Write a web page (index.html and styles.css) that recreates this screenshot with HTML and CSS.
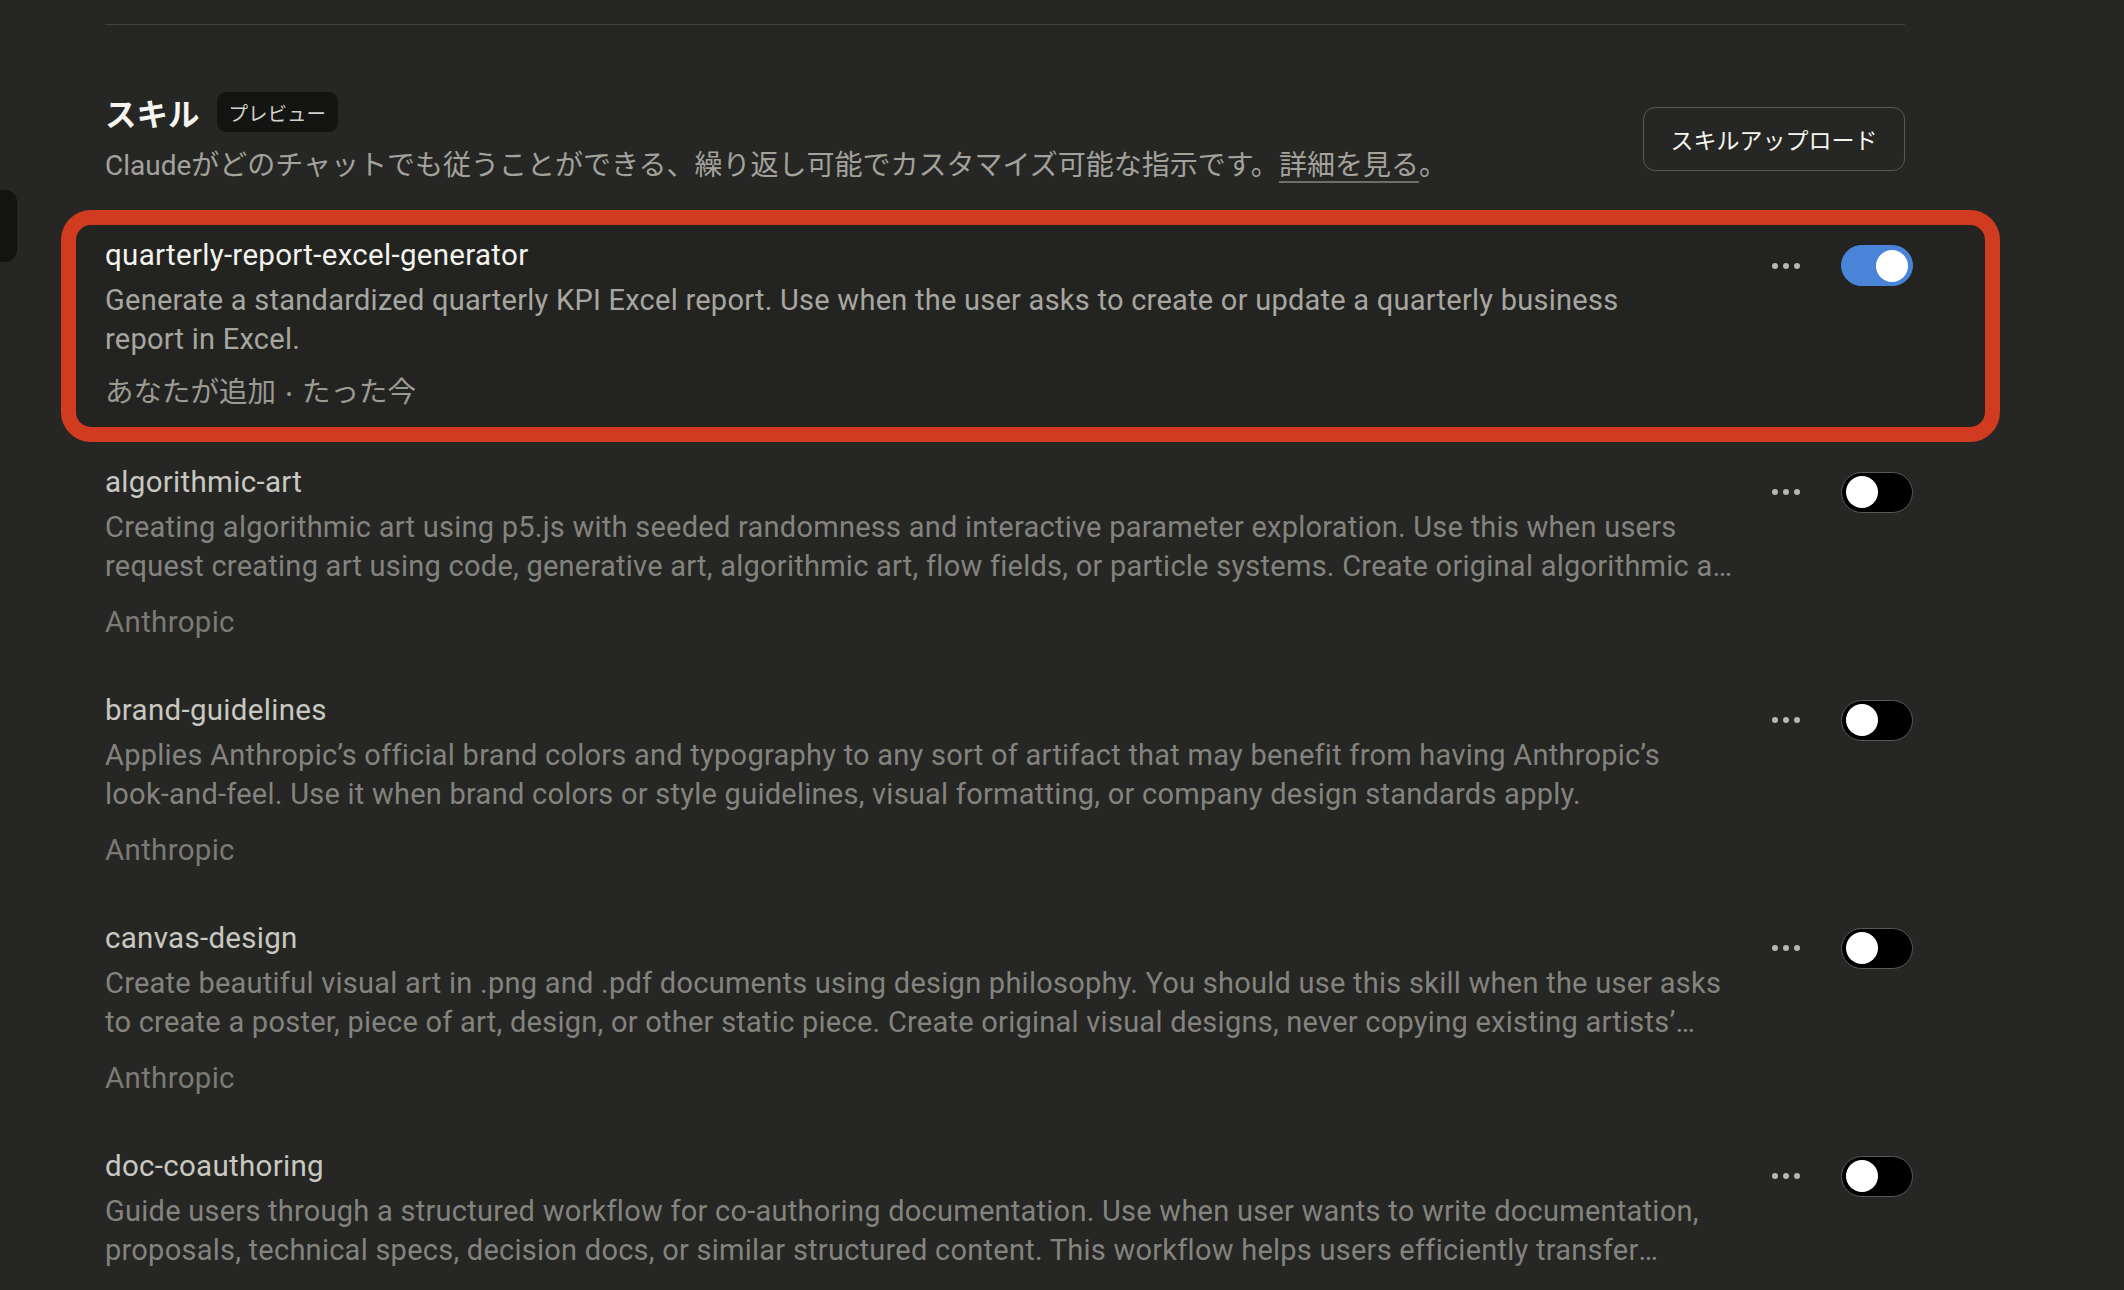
FILE: index.html
```html
<!DOCTYPE html>
<html lang="ja">
<head>
<meta charset="utf-8">
<title>スキル</title>
<link rel="stylesheet" href="styles.css">
</head>
<body>
<div class="side-tab"></div>
<main class="page">
  <div class="divider"></div>
  <section class="header">
    <div class="header-text">
      <div class="title-row">
        <h2 class="title">スキル</h2>
        <span class="badge">プレビュー</span>
      </div>
      <p class="header-desc">Claudeがどのチャットでも従うことができる、繰り返し可能でカスタマイズ可能な指示です。<a class="link" href="#">詳細を見る</a>。</p>
    </div>
    <button class="upload-btn">スキルアップロード</button>
  </section>

  <ul class="list">
    <li class="item highlighted">
      <div class="item-text">
        <div class="name">quarterly-report-excel-generator</div>
        <div class="desc">Generate a standardized quarterly KPI Excel report. Use when the user asks to create or update a quarterly business<br>report in Excel.</div>
        <div class="meta">あなたが追加<span class="sep">•</span>たった今</div>
      </div>
      <div class="controls">
        <span class="dots"><i></i><i></i><i></i></span>
        <span class="toggle on"><span class="knob"></span></span>
      </div>
    </li>
    <li class="item">
      <div class="item-text">
        <div class="name">algorithmic-art</div>
        <div class="desc">Creating algorithmic art using p5.js with seeded randomness and interactive parameter exploration. Use this when users request creating art using code, generative art, algorithmic art, flow fields, or particle systems. Create original algorithmic art rather than copying existing artists' work to avoid copyright violations.</div>
        <div class="meta">Anthropic</div>
      </div>
      <div class="controls">
        <span class="dots"><i></i><i></i><i></i></span>
        <span class="toggle"><span class="knob"></span></span>
      </div>
    </li>
    <li class="item">
      <div class="item-text">
        <div class="name">brand-guidelines</div>
        <div class="desc">Applies Anthropic’s official brand colors and typography to any sort of artifact that may benefit from having Anthropic’s <span class="nowrap">look-and-feel.</span> Use it when brand colors or style guidelines, visual formatting, or company design standards apply.</div>
        <div class="meta">Anthropic</div>
      </div>
      <div class="controls">
        <span class="dots"><i></i><i></i><i></i></span>
        <span class="toggle"><span class="knob"></span></span>
      </div>
    </li>
    <li class="item">
      <div class="item-text">
        <div class="name">canvas-design</div>
        <div class="desc">Create beautiful visual art in .png and .pdf documents using design philosophy. You should use this skill when the user asks to create a poster, piece of art, design, or other static piece. Create original visual designs, never copying existing artists’ work to avoid copyright violations.</div>
        <div class="meta">Anthropic</div>
      </div>
      <div class="controls">
        <span class="dots"><i></i><i></i><i></i></span>
        <span class="toggle"><span class="knob"></span></span>
      </div>
    </li>
    <li class="item">
      <div class="item-text">
        <div class="name">doc-coauthoring</div>
        <div class="desc">Guide users through a structured workflow for co-authoring documentation. Use when user wants to write documentation, proposals, technical specs, decision docs, or similar structured content. This workflow helps users efficiently transfer context, refine content through iteration, and verify the doc works for readers.</div>
        <div class="meta">Anthropic</div>
      </div>
      <div class="controls">
        <span class="dots"><i></i><i></i><i></i></span>
        <span class="toggle"><span class="knob"></span></span>
      </div>
    </li>
  </ul>
</main>
</body>
</html>
```
FILE: styles.css
```css
*, *::before, *::after { box-sizing: border-box; }

html, body {
  margin: 0;
  padding: 0;
  height: 100%;
  overflow: hidden;
}

body {
  background: #262624;
  font-family: Roboto, "Noto Sans CJK JP", sans-serif;
  color: #f3f2ed;
  position: relative;
}

.side-tab {
  position: absolute;
  left: 0;
  top: 190px;
  width: 17px;
  height: 72px;
  background: #131312;
  border-radius: 0 12px 12px 0;
}

.page {
  margin-left: 105px;
  width: 1808px;
  padding-top: 24px;
}

.divider {
  width: 1800px;
  height: 1px;
  background: #41413d;
}

.header {
  width: 1800px;
  margin-top: 67px;
  display: flex;
  justify-content: space-between;
  align-items: center;
}

.title-row {
  display: flex;
  align-items: center;
  gap: 17px;
  height: 40px;
}

.title {
  margin: 0;
  font-size: 31.5px;
  font-weight: 700;
  line-height: 40px;
  color: #f6f5f0;
  font-family: "Noto Sans CJK JP", sans-serif;
}

.badge {
  display: inline-flex;
  align-items: center;
  height: 40px;
  padding: 0 12px;
  border-radius: 9px;
  background: #141413;
  color: #d2d1ca;
  font-size: 19.5px;
  font-family: "Noto Sans CJK JP", sans-serif;
}

.header-desc {
  margin: 14px 0 0;
  font-size: 28px;
  line-height: 39px;
  color: #a3a29b;
}

.link {
  color: #a3a29b;
  text-decoration: underline;
  text-decoration-color: #6f6e69;
  text-underline-offset: 6px;
  text-decoration-thickness: 2px;
}

.upload-btn {
  width: 262px;
  height: 64px;
  border: 1px solid #5b5a55;
  border-radius: 12px;
  background: transparent;
  color: #f6f5f0;
  font-size: 23px;
  font-family: "Noto Sans CJK JP", sans-serif;
  padding: 0;
}

.list {
  list-style: none;
  margin: 52px 0 0;
  padding: 0;
}

.item {
  position: relative;
  z-index: 0;
  display: flex;
  align-items: flex-start;
  padding-bottom: 50px;
}

.item.highlighted::before {
  content: "";
  position: absolute;
  z-index: -1;
  left: -44px;
  right: -87px;
  top: -27px;
  height: 232px;
  border: 15px solid #d13b20;
  border-radius: 30px;
  background: #232321;
}

.item-text {
  width: 1630px;
}

.nowrap { white-space: nowrap; }

.name {
  font-size: 29.5px;
  letter-spacing: 0.3px;
  line-height: 36px;
  color: #c9c8c1;
}

.desc {
  margin-top: 8px;
  font-size: 29px;
  letter-spacing: 0.25px;
  line-height: 39px;
  max-height: 78px;
  color: #84837d;
  display: -webkit-box;
  -webkit-line-clamp: 2;
  -webkit-box-orient: vertical;
  overflow: hidden;
}

.meta {
  margin-top: 17px;
  font-size: 29.5px;
  letter-spacing: 0.3px;
  line-height: 39px;
  color: #7b7a75;
}

.highlighted .name { color: #f4f3ee; }
.highlighted .desc { color: #a7a69f; }
.highlighted .meta { color: #9b9a93; margin-top: 14px; font-size: 28.5px; letter-spacing: 0; }

.sep {
  display: inline-block;
  margin: 0 10px;
  font-size: 18px;
  vertical-align: middle;
}

.controls {
  margin-left: auto;
  display: flex;
  align-items: center;
  gap: 41px;
  margin-top: 8px;
}

.dots {
  display: flex;
  gap: 5px;
}

.dots i {
  display: block;
  width: 6px;
  height: 6px;
  border-radius: 50%;
  background: #b7b6af;
}

.toggle {
  display: flex;
  align-items: center;
  width: 72px;
  height: 41px;
  padding: 0 4px;
  border-radius: 21px;
  background: #000;
  border: 1px solid #5a5a56;
}

.toggle .knob {
  width: 32px;
  height: 32px;
  border-radius: 50%;
  background: #fff;
}

.toggle.on {
  background: #4a84d9;
  border-color: #4a84d9;
  justify-content: flex-end;
}
```
